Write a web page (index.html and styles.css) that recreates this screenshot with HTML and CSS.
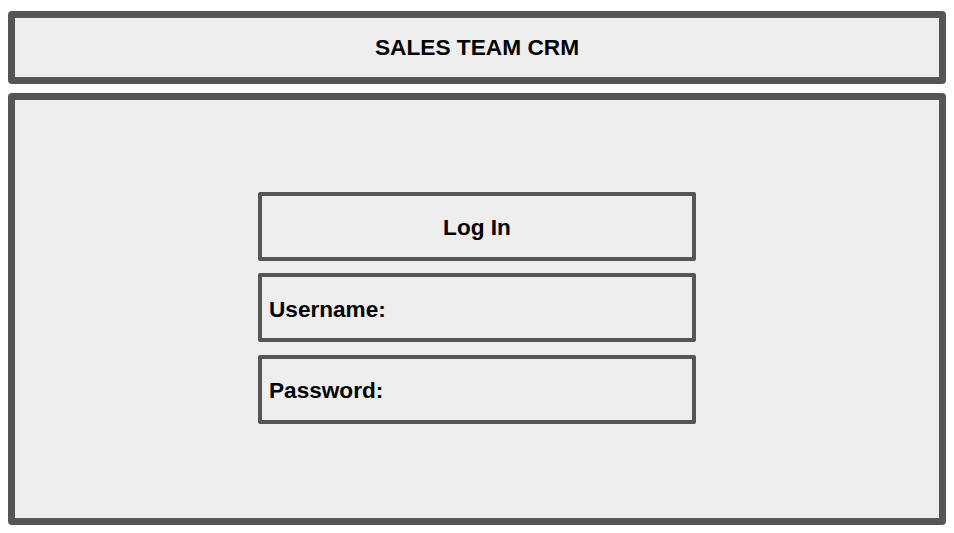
FILE: index.html
```html
<!DOCTYPE html>
<html>
<head>
<meta charset="utf-8">
<link rel="stylesheet" href="styles.css">
</head>
<body>
<div class="page">
  <header class="header">SALES TEAM CRM</header>
  <main class="main">
    <div class="form">
      <div class="box box-title">Log In</div>
      <div class="box box-field">Username:</div>
      <div class="box box-field">Password:</div>
    </div>
  </main>
</div>
</body>
</html>
```
FILE: styles.css
```css
html, body {
  margin: 0;
  padding: 0;
  background: #ffffff;
}
body {
  font-family: "Liberation Sans", Arial, sans-serif;
  color: #000;
}
.page {
  width: 954px;
  height: 533px;
  box-sizing: border-box;
  padding: 11px 8px 8px 8px;
  display: flex;
  flex-direction: column;
  gap: 9px;
}
.header {
  box-sizing: border-box;
  height: 73px;
  border: 7px solid #555555;
  border-radius: 4px;
  background: #eeeeee;
  display: flex;
  align-items: center;
  justify-content: center;
  font-weight: bold;
  font-size: 22.7px;
  padding-top: 1px;
}
.main {
  box-sizing: border-box;
  height: 433px;
  border: 7px solid #555555;
  border-radius: 4px;
  background: #eeeeee;
  display: flex;
  align-items: center;
  justify-content: center;
}
.form {
  display: flex;
  flex-direction: column;
  gap: 12.5px;
  width: 438px;
  margin-bottom: 2px;
}
.box {
  box-sizing: border-box;
  height: 69px;
  border: 4px solid #555555;
  border-radius: 2px;
  display: flex;
  align-items: center;
  font-weight: bold;
  font-size: 22.6px;
  padding-top: 4px;
}
.box-title {
  justify-content: center;
}
.box-field {
  padding-left: 7px;
}
```
